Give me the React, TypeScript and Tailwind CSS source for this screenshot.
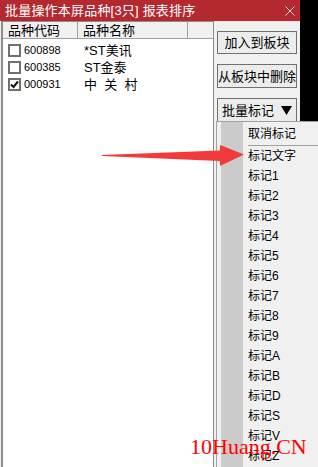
import { useState } from 'react';

type Stock = { code: string; name: string; checked: boolean };

const STOCKS: Stock[] = [
  { code: '600898', name: '*ST美讯', checked: false },
  { code: '600385', name: 'ST金泰', checked: false },
  { code: '000931', name: '中  关  村', checked: true },
];

const MARKS = ['标记文字', '标记1', '标记2', '标记3', '标记4', '标记5', '标记6', '标记7', '标记8', '标记9', '标记A', '标记B', '标记D', '标记S', '标记V', '标记Z'];

const FONT = { fontFamily: '"Liberation Sans", "Noto Sans CJK SC", sans-serif' };

function CheckBox({ checked, onClick }: { checked: boolean; onClick: () => void }) {
  return (
    <button
      onClick={onClick}
      className="w-[13px] h-[13px] border-2 border-[#707070] bg-white flex items-center justify-center shrink-0"
    >
      {checked && (
        <svg width="9" height="9" viewBox="0 0 9 9">
          <path d="M1 4.5 L3.5 7 L8 1.5" stroke="#111" strokeWidth="2" fill="none" />
        </svg>
      )}
    </button>
  );
}

export default function App() {
  const [stocks, setStocks] = useState(STOCKS);

  function toggle(code: string) {
    setStocks((prev) => prev.map((s) => (s.code === code ? { ...s, checked: !s.checked } : s)));
  }

  return (
    <div className="relative w-[318px] h-[467px] bg-black overflow-hidden" style={FONT}>
      <div className="w-[300px] h-full flex flex-col bg-[#f0f0f0]">
        {/* title bar */}
        <div className="h-[21px] bg-[#b3292f] flex items-center justify-between pl-[5px] pr-[5px] text-white text-[13px] leading-none">
          <span className="tracking-[0.2px]">批量操作本屏品种[3只] 报表排序</span>
          <svg width="10" height="10" viewBox="0 0 10 10">
            <path d="M0.5 0.5 L9.5 9.5 M9.5 0.5 L0.5 9.5" stroke="#f3d6d6" strokeWidth="1" />
          </svg>
        </div>

        <div className="flex-1 flex">
          {/* list */}
          <div className="w-[213px] ml-px border-l-2 border-r border-t border-[#8c8c8c] bg-white flex flex-col">
            <div className="h-[17px] flex bg-[#f0f0f0] border-b border-[#a0a0a0] text-[13px] leading-none text-black">
              <div className="w-[75px] pl-[5px] flex items-center border-r border-[#a0a0a0]">品种代码</div>
              <div className="w-[110px] pl-[5px] flex items-center border-r border-[#a0a0a0]">品种名称</div>
              <div className="flex-1" />
            </div>
            <div className="pt-[3px]">
              {stocks.map((s) => (
                <div key={s.code} className="h-[17px] flex items-center text-black">
                  <div className="w-[75px] pl-[5px] flex items-center gap-[3px]">
                    <CheckBox checked={s.checked} onClick={() => toggle(s.code)} />
                    <span className="text-[11px] leading-none">{s.code}</span>
                  </div>
                  <div className="pl-[6px] text-[13px] leading-none whitespace-pre">{s.name}</div>
                </div>
              ))}
            </div>
          </div>

          {/* buttons */}
          <div className="flex-1 flex flex-col pl-[3px] pt-[10px] gap-[10px] text-[13px] text-black">
            <button className="w-[80px] h-[23px] border border-[#707070] bg-[#ececec] leading-none">加入到板块</button>
            <button className="w-[80px] h-[24px] border border-[#707070] bg-[#ececec] leading-none">从板块中删除</button>
            <button className="w-[80px] h-[24px] border border-[#707070] bg-[#ececec] leading-none flex items-center justify-center gap-[7px]">
              <span>批量标记</span>
              <svg width="11" height="9" viewBox="0 0 11 9">
                <polygon points="0,0 11,0 5.5,9" fill="#000" />
              </svg>
            </button>
          </div>
        </div>
      </div>

      {/* dropdown menu */}
      <div className="absolute left-[216px] top-[121px] w-[102px] h-[346px] bg-[#f0f0f0] border-l border-t border-[#a0a0a0] pl-[4px] flex text-[12px] text-black">
        <div className="w-[22px] bg-[#cbcbcb]" />
        <div className="flex-1 pt-[2px]">
          <div className="h-[20px] pl-[5px] flex items-center leading-none">取消标记</div>
          <div className="ml-[5px] mt-px h-px bg-[#a0a0a0]" />
          {MARKS.map((m) => (
            <div key={m} className="h-[20px] pl-[5px] flex items-center leading-none">{m}</div>
          ))}
        </div>
      </div>

      {/* red arrow */}
      <svg className="absolute left-0 top-0 pointer-events-none" width="318" height="467">
        <polygon points="102,155 220,150.5 220,145 244,154.5 220,166 220,161 102,156" fill="#f23a3a" />
      </svg>

      {/* watermark */}
      <div
        className="absolute left-[190px] top-[436px] text-[22px] leading-none text-[#ff0000] pointer-events-none"
        style={{ fontFamily: '"Liberation Serif", serif' }}
      >
        10Huang.CN
      </div>
    </div>
  );
}
